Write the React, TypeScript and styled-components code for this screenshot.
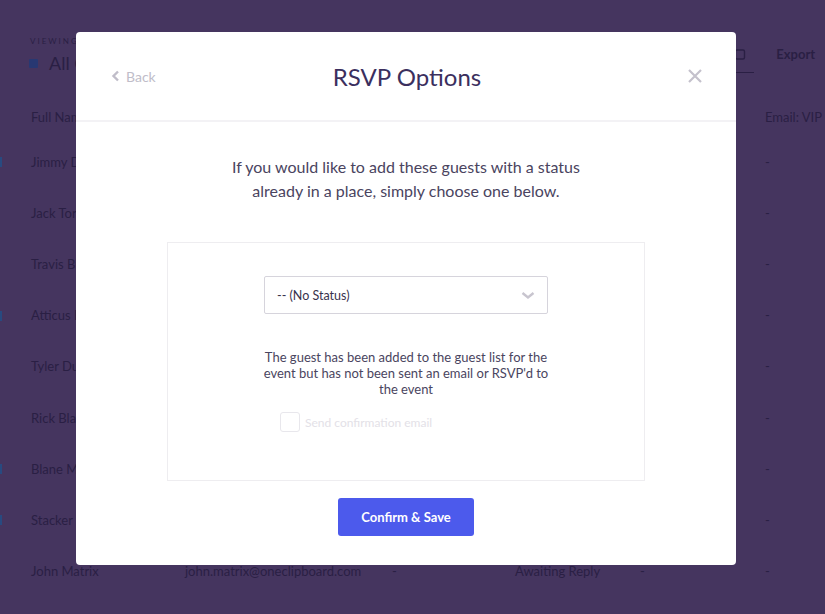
import styled, { createGlobalStyle } from "styled-components";

const GlobalStyle = createGlobalStyle`
  html, body {
    margin: 0;
    padding: 0;
    width: 825px;
    height: 614px;
    overflow: hidden;
    font-family: Lato, "Liberation Sans", sans-serif;
  }
  * {
    box-sizing: border-box;
  }
`;

const StyledPage = styled.div`
  position: relative;
  width: 825px;
  height: 614px;
  background-color: #45355f;
  color: #2a1f44;
  overflow: hidden;
`;

const TopBar = styled.div`
  display: flex;
  justify-content: space-between;
  align-items: flex-start;
  padding: 36px 0 0 29px;
  height: 98px;
`;

const Viewing = styled.div`
  display: flex;
  flex-direction: column;
  gap: 6px;
`;

const ViewingLabel = styled.span`
  font-size: 8px;
  letter-spacing: 2px;
  padding-left: 1px;
`;

const ViewingName = styled.div`
  display: flex;
  align-items: center;
  gap: 11px;
  font-size: 18px;
`;

const Swatch = styled.span`
  flex-shrink: 0;
  width: 9px;
  height: 9px;
  border-radius: 1px;
  background-color: #283872;
`;

const Actions = styled.div`
  display: flex;
  align-items: center;
  gap: 12px;
  margin-right: -6px;
  padding-top: 10px;
  font-size: 13px;
  font-weight: 700;
`;

const Tab = styled.span`
  padding: 0 8px 12px 2px;
  border-bottom: 1px solid #2a1f44;
  margin-bottom: -13px;
  margin-right: 10px;
  display: flex;
`;

const TableHead = styled.div`
  display: grid;
  grid-template-columns: 154px 207px 123px 125px 125px 1fr;
  align-items: center;
  padding-left: 31px;
  height: 38px;
  font-size: 13px;
  white-space: nowrap;
  overflow: hidden;
`;

const Row = styled.div<{ $marked?: boolean }>`
  position: relative;
  display: grid;
  grid-template-columns: 154px 207px 123px 125px 125px 1fr;
  align-items: center;
  padding-left: 31px;
  height: 51.2px;
  font-size: 13px;
  white-space: nowrap;

  &::before {
    content: "";
    display: ${(p) => (p.$marked ? "block" : "none")};
    position: absolute;
    left: 0;
    top: 21px;
    width: 2px;
    height: 10px;
    background-color: #284a80;
  }
`;

const Overlay = styled.div`
  position: absolute;
  inset: 0;
  display: flex;
  align-items: flex-start;
  padding: 32px 0 0 76px;
`;

const Modal = styled.div`
  width: 660px;
  height: 533px;
  background-color: #ffffff;
  border-radius: 4px;
  display: flex;
  flex-direction: column;
`;

const ModalHeader = styled.div`
  display: grid;
  grid-template-columns: 1fr auto 1fr;
  align-items: center;
  height: 90px;
  padding: 0 33px 0 35px;
  border-bottom: 2px solid #f3f2f5;
`;

const BackButton = styled.button`
  justify-self: start;
  display: flex;
  align-items: center;
  gap: 6px;
  border: none;
  background: none;
  padding: 0;
  font-family: Lato, "Liberation Sans", sans-serif;
  font-size: 14px;
  color: #c0bdc9;
  cursor: pointer;
`;

const Title = styled.h1`
  margin: 0;
  font-size: 24px;
  font-weight: 400;
  color: #3b2f5e;
`;

const CloseButton = styled.button`
  justify-self: end;
  display: flex;
  border: none;
  background: none;
  padding: 0;
  cursor: pointer;
`;

const ModalBody = styled.div`
  display: flex;
  flex-direction: column;
  align-items: center;
  padding-top: 33px;
`;

const Intro = styled.p`
  margin: 0 0 39px;
  width: 360px;
  text-align: center;
  font-size: 16px;
  line-height: 24px;
  color: #4a4460;
`;

const OptionsBox = styled.div`
  width: 478px;
  height: 239px;
  border: 1px solid #eeedf0;
  display: flex;
  flex-direction: column;
  align-items: center;
  padding-top: 33px;
`;

const Select = styled.div`
  width: 284px;
  height: 38px;
  border: 1px solid #d6d4dc;
  border-radius: 2px;
  display: flex;
  align-items: center;
  justify-content: space-between;
  padding: 0 12px 0 12px;
  font-size: 12.5px;
  color: #38324d;
`;

const Description = styled.p`
  margin: 35px 0 15px;
  width: 290px;
  text-align: center;
  font-size: 13px;
  line-height: 16px;
  color: #4a4560;
`;

const CheckRow = styled.label`
  align-self: flex-start;
  margin-left: 112px;
  display: flex;
  align-items: center;
  gap: 5px;
  font-size: 12px;
  color: #e3e1e7;
`;

const CheckBox = styled.span`
  width: 20px;
  height: 20px;
  border: 1px solid #e8e7ec;
  border-radius: 3px;
`;

const ConfirmButton = styled.button`
  margin-top: 17px;
  width: 136px;
  height: 38px;
  border: none;
  border-radius: 3px;
  background-color: #4c5aec;
  color: #ffffff;
  font-family: Lato, "Liberation Sans", sans-serif;
  font-size: 13px;
  font-weight: 700;
  cursor: pointer;
`;

const guests = [
  { name: "Jimmy Dean", email: "jimmy.dean@oneclipboard.com", marked: true },
  { name: "Jack Torrance", email: "jack.torrance@oneclipboard.com" },
  { name: "Travis Bickle", email: "travis.bickle@oneclipboard.com" },
  { name: "Atticus Finch", email: "atticus.finch@oneclipboard.com", marked: true },
  { name: "Tyler Durden", email: "tyler.durden@oneclipboard.com" },
  { name: "Rick Blaine", email: "rick.blaine@oneclipboard.com" },
  { name: "Blane McDonagh", email: "blane.mcdonagh@oneclipboard.com", marked: true },
  { name: "Stacker Pentecost", email: "stacker.pentecost@oneclipboard.com", marked: true },
  { name: "John Matrix", email: "john.matrix@oneclipboard.com" },
];

const App = () => {
  return (
    <StyledPage>
      <GlobalStyle />
      <TopBar>
        <Viewing>
          <ViewingLabel>VIEWING</ViewingLabel>
          <ViewingName>
            <Swatch />
            All Contacts
          </ViewingName>
        </Viewing>
        <Actions>
          <Tab>
            <svg width="12" height="12" viewBox="0 0 12 12">
              <rect x="1.5" y="2" width="9" height="9" rx="1.5" fill="none" stroke="#2a1f44" strokeWidth="1.4" />
            </svg>
          </Tab>
          <span>Export</span>
          <span>I</span>
        </Actions>
      </TopBar>
      <TableHead>
        <span>Full Name</span>
        <span>Email</span>
        <span>Phone</span>
        <span>Status</span>
        <span>Group</span>
        <span>Email: VIP I</span>
      </TableHead>
      {guests.map((g) => (
        <Row key={g.name} $marked={g.marked}>
          <span>{g.name}</span>
          <span>{g.email}</span>
          <span>-</span>
          <span>Awaiting Reply</span>
          <span>-</span>
          <span>-</span>
        </Row>
      ))}

      <Overlay>
        <Modal>
          <ModalHeader>
            <BackButton>
              <svg width="9" height="12" viewBox="0 0 9 12">
                <path d="M7 1.5 L2.5 6 L7 10.5" fill="none" stroke="#c0bdc9" strokeWidth="2.4" />
              </svg>
              Back
            </BackButton>
            <Title>RSVP Options</Title>
            <CloseButton>
              <svg width="16" height="16" viewBox="0 0 16 16">
                <path d="M2 2 L14 14 M14 2 L2 14" stroke="#c4c1cc" strokeWidth="2.2" />
              </svg>
            </CloseButton>
          </ModalHeader>
          <ModalBody>
            <Intro>
              If you would like to add these guests with a status already in a place, simply choose one below.
            </Intro>
            <OptionsBox>
              <Select>
                <span>-- (No Status)</span>
                <svg width="14" height="9" viewBox="0 0 14 9">
                  <path d="M1.5 2 L7 6.5 L12.5 2" fill="none" stroke="#c8c5cf" strokeWidth="2.4" />
                </svg>
              </Select>
              <Description>
                The guest has been added to the guest list for the event but has not been sent an email or RSVP'd to
                the event
              </Description>
              <CheckRow>
                <CheckBox />
                Send confirmation email
              </CheckRow>
            </OptionsBox>
            <ConfirmButton>Confirm &amp; Save</ConfirmButton>
          </ModalBody>
        </Modal>
      </Overlay>
    </StyledPage>
  );
};

export default App;
